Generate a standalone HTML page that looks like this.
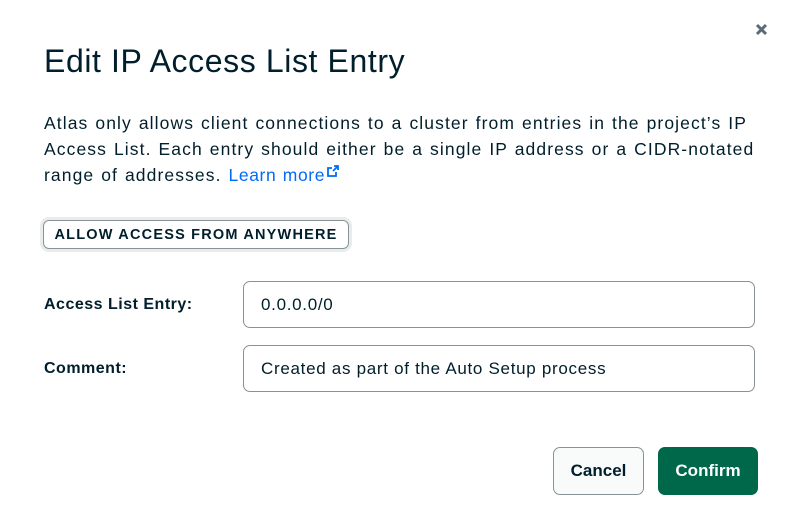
<!DOCTYPE html>
<html><head><style>
body{margin:0;width:799px;height:532px;background:#fff;font-family:"Liberation Sans",sans-serif;color:#001e2b;position:relative;overflow:hidden}
.a{position:absolute}
h1{position:absolute;left:44px;top:43px;margin:0;font-size:32px;font-weight:500;letter-spacing:0.6px;white-space:nowrap}
p{position:absolute;left:44px;top:110px;margin:0;width:760px;font-size:17.5px;line-height:26px;letter-spacing:1.1px;word-spacing:1px;white-space:nowrap}
a{color:#016bf8;text-decoration:none;letter-spacing:0.6px}
.btn1{left:43px;top:220px;width:306px;height:29px;border:1px solid #889397;border-radius:6px;box-shadow:0 0 0 3px #e8edeb;font-size:14.5px;font-weight:bold;letter-spacing:1.2px;display:flex;align-items:center;justify-content:center;box-sizing:border-box;white-space:nowrap}
.lab{left:44px;font-size:16px;font-weight:bold;letter-spacing:0.5px}
.inp{left:243px;width:512px;height:47px;border:1px solid #889397;border-radius:7px;box-sizing:border-box;padding-left:17px;display:flex;align-items:center;font-size:17px;letter-spacing:0.7px}
.b{top:447px;height:48px;border-radius:7px;box-sizing:border-box;display:flex;align-items:center;justify-content:center;font-size:17px;font-weight:bold}
</style></head><body>
<svg class="a" style="left:755px;top:23px" width="13" height="13" viewBox="0 0 13 13"><path d="M2 2L11 11M11 2L2 11" stroke="#5c6c75" stroke-width="3"/></svg>
<h1>Edit IP Access List Entry</h1>
<p>Atlas only allows client connections to a cluster from entries in the project’s IP<br>Access List. Each entry should either be a single IP address or a CIDR-notated<br>range of addresses. <a>Learn more<svg width="12" height="12" viewBox="0 0 12 12" style="vertical-align:4px;margin-left:2px"><path d="M7 1h4v4M11 1L6 6M9 7v4H1V3h4" stroke="#016bf8" stroke-width="1.8" fill="none"/></svg></a></p>
<div class="a btn1">ALLOW ACCESS FROM ANYWHERE</div>
<div class="a lab" style="top:296px">Access List Entry:</div>
<div class="a inp" style="top:281px">0.0.0.0/0</div>
<div class="a lab" style="top:360px">Comment:</div>
<div class="a inp" style="top:345px">Created as part of the Auto Setup process</div>
<div class="a b" style="left:553px;width:91px;border:1px solid #889397;background:#f9fbfa">Cancel</div>
<div class="a b" style="left:658px;width:100px;background:#00684a;color:#fff">Confirm</div>
</body></html>
